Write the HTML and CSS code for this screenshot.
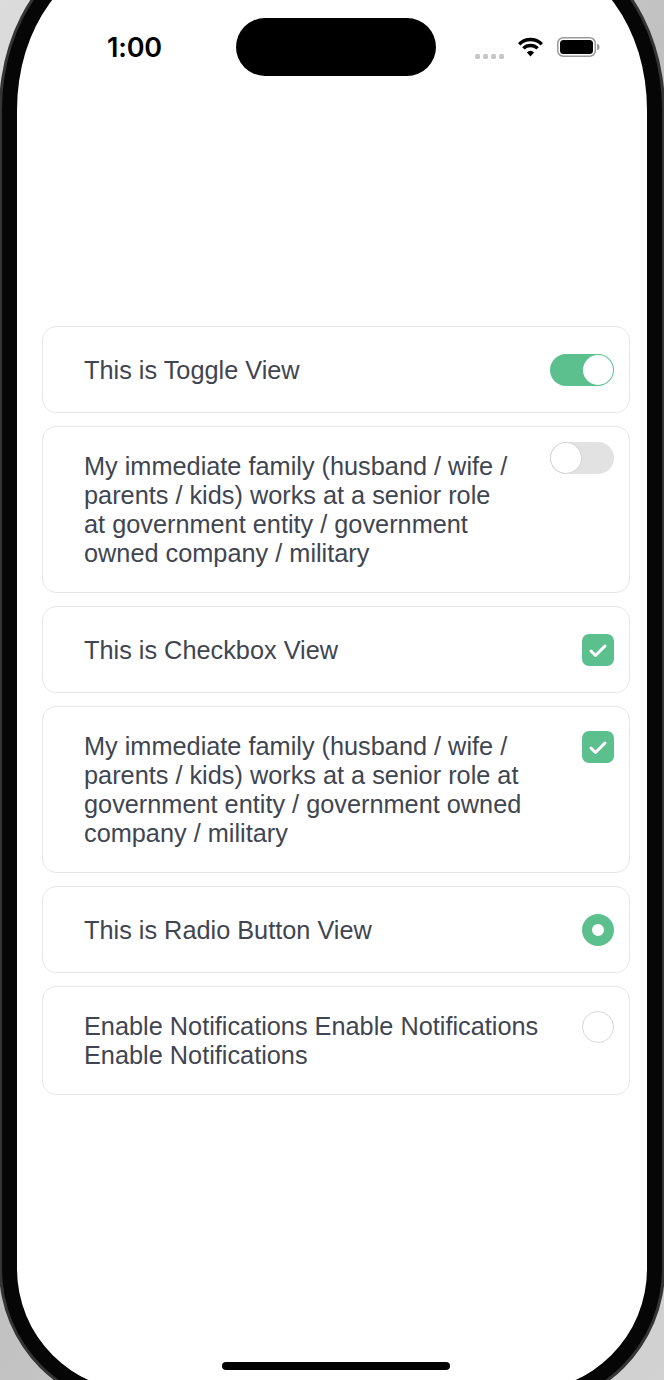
FILE: index.html
```html
<!DOCTYPE html>
<html lang="en">
<head>
<meta charset="utf-8">
<title>Controls</title>
<link rel="stylesheet" href="styles.css">
</head>
<body>
<div class="device">
  <div class="bezel">
    <div class="screen">
      <div class="status-bar">
        <span class="time">1:00</span>
        <div class="island"></div>
        <div class="status-icons">
          <div class="signal"><span></span><span></span><span></span><span></span></div>
          <svg class="wifi" width="27" height="20" viewBox="0 0 27 20">
            <path d="M2.2 7.2 A16 16 0 0 1 24.8 7.2" fill="none" stroke="#000" stroke-width="3.4"/>
            <path d="M6.4 11.4 A10 10 0 0 1 20.6 11.4" fill="none" stroke="#000" stroke-width="3.4"/>
            <path d="M13.5 19.5 L9.9 15.4 A5 5 0 0 1 17.1 15.4 Z" fill="#000"/>
          </svg>
          <svg class="battery" width="43" height="20" viewBox="0 0 43 20">
            <rect x="0.75" y="0.75" width="37.5" height="18.5" rx="5.5" fill="none" stroke="#9a9a9a" stroke-width="1.5"/>
            <rect x="3" y="3" width="33" height="14" rx="3.5" fill="#000"/>
            <path d="M40 7 Q42.5 7 42.5 10 Q42.5 13 40 13 Z" fill="#9a9a9a"/>
          </svg>
        </div>
      </div>

      <main class="list">
        <div class="card">
          <span class="label">This is Toggle View</span>
          <span class="toggle toggle--on"><span class="knob"></span></span>
        </div>
        <div class="card card--multi">
          <span class="label">My immediate family (husband / wife / parents / kids) works at a senior role at government entity / government owned company / military</span>
          <span class="toggle toggle--off"><span class="knob"></span></span>
        </div>
        <div class="card">
          <span class="label">This is Checkbox View</span>
          <svg class="check" width="32" height="32" viewBox="0 0 32 32"><rect width="32" height="32" rx="7" fill="#5bc08e"/><path d="M9 17 L13.5 21.5 L23 12" fill="none" stroke="#fff" stroke-width="3" stroke-linecap="round" stroke-linejoin="round"/></svg>
        </div>
        <div class="card card--multi">
          <span class="label">My immediate family (husband / wife / parents / kids) works at a senior role at government entity / government owned company / military</span>
          <svg class="check" width="32" height="32" viewBox="0 0 32 32"><rect width="32" height="32" rx="7" fill="#5bc08e"/><path d="M9 17 L13.5 21.5 L23 12" fill="none" stroke="#fff" stroke-width="3" stroke-linecap="round" stroke-linejoin="round"/></svg>
        </div>
        <div class="card">
          <span class="label">This is Radio Button View</span>
          <span class="radio radio--on"></span>
        </div>
        <div class="card card--multi">
          <span class="label">Enable Notifications Enable Notifications Enable Notifications</span>
          <span class="radio"></span>
        </div>
      </main>

      <div class="home-indicator"></div>
    </div>
  </div>
</div>
</body>
</html>
```

FILE: styles.css
```css
* { box-sizing: border-box; }
html, body { margin: 0; padding: 0; }
body { font-family: "Liberation Sans", Arial, sans-serif; }

.device {
  width: 664px;
  height: 1380px;
  overflow: hidden;
  background: linear-gradient(135deg, #dcdcdc, #b8b8b8 45%, #d2d2d2);
}
.bezel {
  width: 666px;
  height: 1467px;
  margin: -58px 0 0 -1px;
  padding: 15px;
  border: 3px solid #353535;
  border-radius: 128px 128px 140px 140px / 168px 168px 140px 140px;
  background: #060606;
}
.screen {
  height: 100%;
  background: #fff;
  border-radius: 110px 110px 122px 122px / 150px 150px 122px 122px;
  display: flex;
  flex-direction: column;
  overflow: hidden;
}

.status-bar {
  position: relative;
  height: 58px;
  margin-top: 58px;
  display: flex;
  align-items: center;
  justify-content: space-between;
  padding: 0 47px 0 90px;
}
.time {
  font-family: Inter, "Liberation Sans", sans-serif;
  font-weight: 600;
  font-size: 27px;
  color: #000;
  letter-spacing: -0.2px;
}
.island {
  position: absolute;
  left: 219px;
  top: 0;
  width: 200px;
  height: 58px;
  border-radius: 29px;
  background: #000;
}
.status-icons {
  display: flex;
  align-items: center;
  gap: 13px;
}
.signal {
  display: flex;
  gap: 3px;
  margin-top: 19px;
}
.signal span {
  width: 5px;
  height: 5px;
  border-radius: 1.5px;
  background: #c8c8c8;
}
.wifi, .battery { display: block; }

.list {
  display: flex;
  flex-direction: column;
  gap: 13px;
  margin-top: 250px;
  padding: 0 17px 0 25px;
}
.card {
  display: flex;
  align-items: center;
  gap: 40px;
  min-height: 87px;
  padding: 0 15px 0 41px;
  border: 1px solid #e6e6e6;
  border-radius: 14px;
  background: #fff;
}
.card--multi {
  align-items: flex-start;
  padding-top: 24px;
  padding-bottom: 24px;
}
.label {
  flex: 1;
  font-size: 25.3px;
  line-height: 29px;
  color: #3f4551;
  padding-top: 1px;
}

.toggle {
  flex: none;
  display: flex;
  align-items: center;
  width: 64px;
  height: 32px;
  padding: 1px;
  border-radius: 16px;
}
.toggle--on { background: #5bc08e; justify-content: flex-end; }
.toggle--off { background: #e2e2e2; }
.knob {
  width: 30px;
  height: 30px;
  border-radius: 50%;
  background: #fff;
}
.toggle--off .knob { box-shadow: 0 0 0 1px #d6d6d6; }
.card--multi .toggle { margin-top: -9px; }

.check { flex: none; display: block; }

.radio {
  flex: none;
  width: 32px;
  height: 32px;
  border-radius: 50%;
  border: 1.5px solid #d8d8d8;
  background: #fff;
}
.radio--on {
  border: 10px solid #5bc08e;
}

.home-indicator {
  width: 228px;
  height: 8px;
  border-radius: 4px;
  background: #000;
  margin: auto 0 21px 205px;
}
```
